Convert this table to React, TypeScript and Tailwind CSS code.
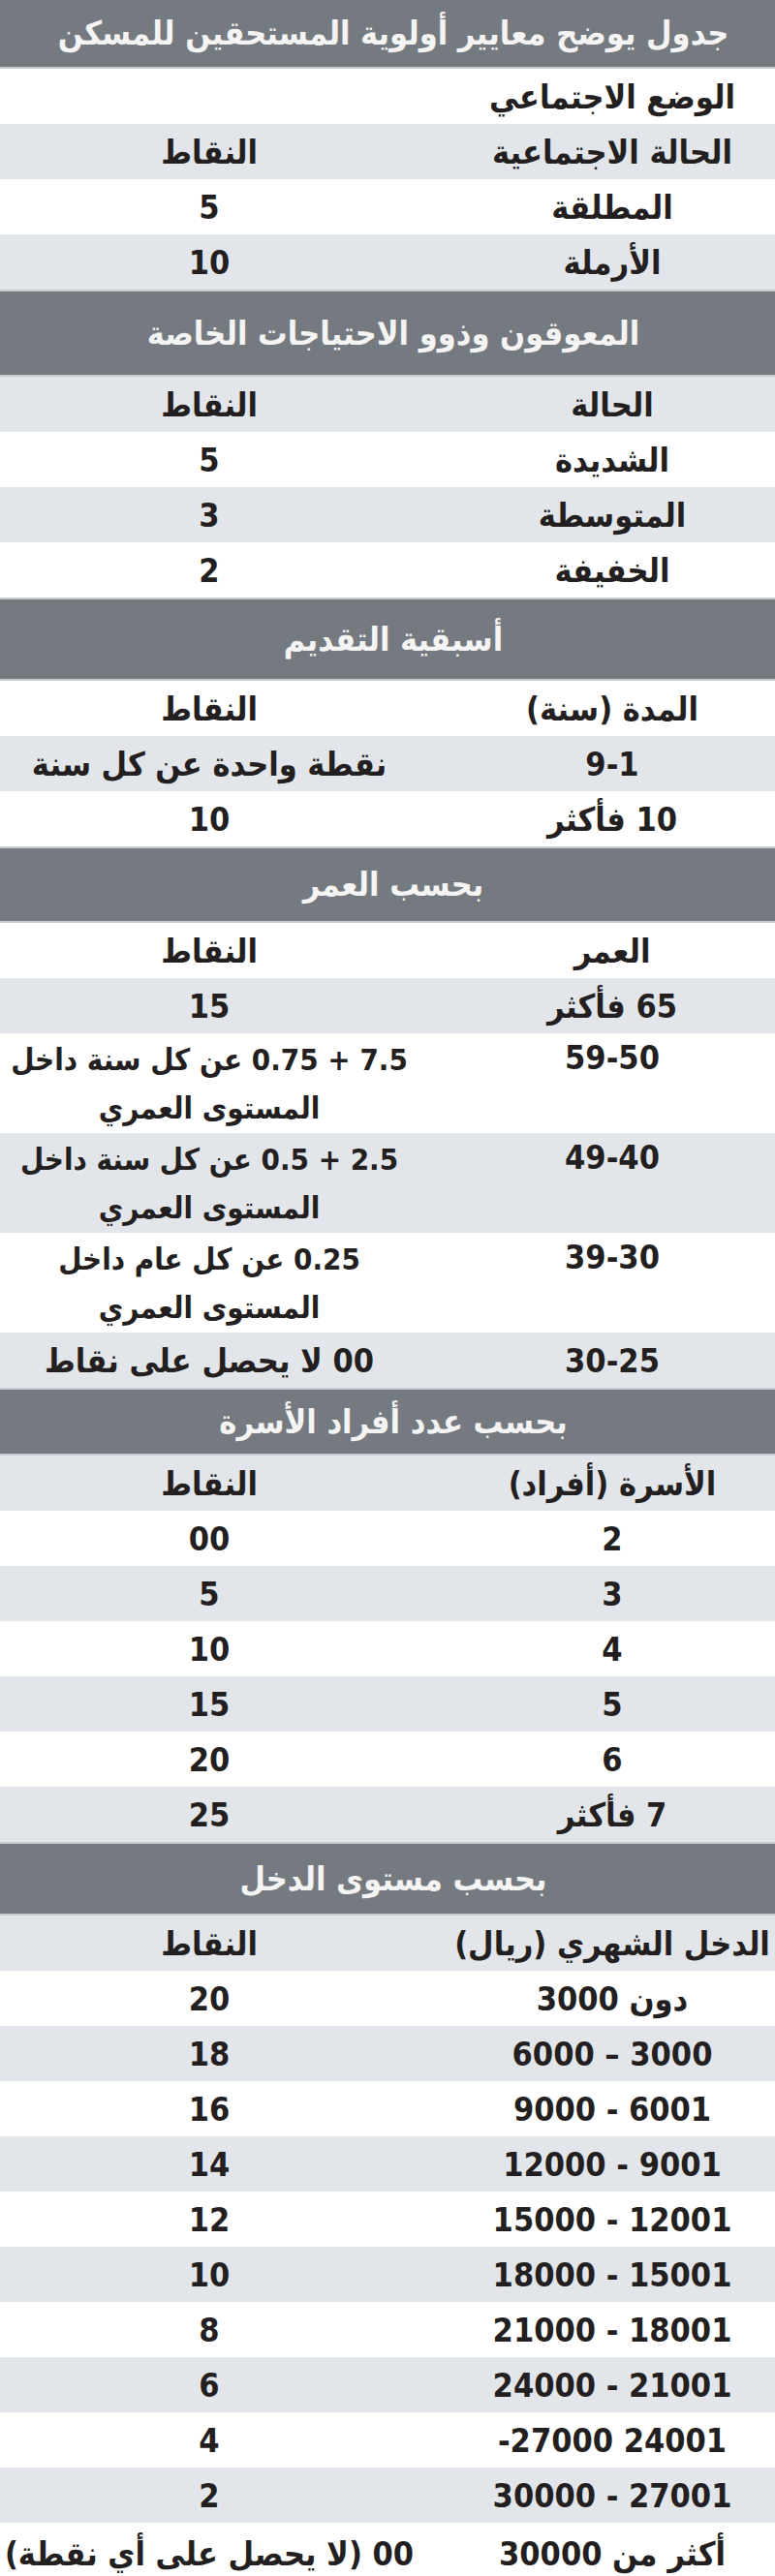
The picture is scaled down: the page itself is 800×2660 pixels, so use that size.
import React from 'react';

type Row = {
  label: string;
  points?: string;
  light?: boolean;
  tall?: boolean;
  ltrLabel?: boolean;
  h?: string;
};

type Section = {
  title: string;
  band: string;
  first?: boolean;
  rows: Row[];
};

const sections: Section[] = [
  {
    title: 'جدول يوضح معايير أولوية المستحقين للمسكن',
    band: 'h-[71px]',
    first: true,
    rows: [
      { label: 'الوضع الاجتماعي' },
      { label: 'الحالة الاجتماعية', points: 'النقاط', light: true },
      { label: 'المطلقة', points: '5' },
      { label: 'الأرملة', points: '10', light: true },
    ],
  },
  {
    title: 'المعوقون وذوو الاحتياجات الخاصة',
    band: 'h-[90px]',
    rows: [
      { label: 'الحالة', points: 'النقاط', light: true },
      { label: 'الشديدة', points: '5' },
      { label: 'المتوسطة', points: '3', light: true },
      { label: 'الخفيفة', points: '2' },
    ],
  },
  {
    title: 'أسبقية التقديم',
    band: 'h-[86px]',
    rows: [
      { label: 'المدة (سنة)', points: 'النقاط' },
      { label: '9-1', points: 'نقطة واحدة عن كل سنة', light: true, ltrLabel: true },
      { label: '10 فأكثر', points: '10' },
    ],
  },
  {
    title: 'بحسب العمر',
    band: 'h-[79px]',
    rows: [
      { label: 'العمر', points: 'النقاط' },
      { label: '65 فأكثر', points: '15', light: true },
      { label: '59-50', points: '7.5 + 0.75 عن كل سنة داخل\nالمستوى العمري', tall: true, ltrLabel: true },
      { label: '49-40', points: '2.5 + 0.5 عن كل سنة داخل\nالمستوى العمري', tall: true, light: true, ltrLabel: true },
      { label: '39-30', points: '0.25 عن كل عام داخل\nالمستوى العمري', tall: true, ltrLabel: true },
      { label: '30-25', points: '00 لا يحصل على نقاط', light: true, ltrLabel: true },
    ],
  },
  {
    title: 'بحسب عدد أفراد الأسرة',
    band: 'h-[70px]',
    rows: [
      { label: 'الأسرة (أفراد)', points: 'النقاط', light: true },
      { label: '2', points: '00' },
      { label: '3', points: '5', light: true },
      { label: '4', points: '10' },
      { label: '5', points: '15', light: true },
      { label: '6', points: '20' },
      { label: '7 فأكثر', points: '25', light: true },
    ],
  },
  {
    title: 'بحسب مستوى الدخل',
    band: 'h-[76px]',
    rows: [
      { label: 'الدخل الشهري (ريال)', points: 'النقاط', light: true },
      { label: 'دون 3000', points: '20' },
      { label: '6000 – 3000', points: '18', light: true, ltrLabel: true },
      { label: '9000 - 6001', points: '16', ltrLabel: true },
      { label: '12000 - 9001', points: '14', light: true, ltrLabel: true },
      { label: '15000 - 12001', points: '12', ltrLabel: true },
      { label: '18000 - 15001', points: '10', light: true, ltrLabel: true },
      { label: '21000 - 18001', points: '8', ltrLabel: true },
      { label: '24000 - 21001', points: '6', light: true, ltrLabel: true },
      { label: '-27000 24001', points: '4', ltrLabel: true },
      { label: '30000 - 27001', points: '2', light: true, ltrLabel: true },
      { label: 'أكثر من 30000', points: '00 (لا يحصل على أي نقطة)', h: 'h-[63px]' },
    ],
  },
];

const font = { fontFamily: '"DejaVu Sans Condensed", "DejaVu Sans", sans-serif' };

function Cell({ text, ltr }: { text?: string; ltr?: boolean }) {
  if (!text) return null;
  const lines = text.split('\n');
  return (
    <span dir={ltr ? 'ltr' : 'rtl'} className="whitespace-nowrap text-center">
      {lines.map((line, i) => (
        <span key={i} className="block">
          {line}
        </span>
      ))}
    </span>
  );
}

function TableRow({ row }: { row: Row }) {
  const height = row.h ?? (row.tall ? 'h-[103px]' : 'h-[57px]');
  return (
    <div
      className={`grid grid-cols-[368px_432px] ${height} ${row.light ? 'bg-[#e2e6eb]' : 'bg-white'} ${
        row.tall ? 'leading-[50px]' : 'leading-[40px]'
      }`}
    >
      <div className={`flex justify-center pl-8 ${row.tall ? 'items-start' : 'items-center'}`}>
        <Cell text={row.label} ltr={row.ltrLabel} />
      </div>
      <div className={`flex items-center justify-center ${row.tall ? 'text-[31px]' : ''}`}>
        <Cell text={row.points} />
      </div>
    </div>
  );
}

export default function App() {
  return (
    <div dir="rtl" className="w-[800px] bg-white text-[#231f20] font-bold text-[34px]" style={font}>
      {sections.map((s, i) => (
        <div key={i}>
          <div
            className={`flex items-center justify-center bg-[#747a7f] text-[#f4f4f4] ${s.band} ${
              s.first ? '' : 'border-t-2 border-[#c7cbcf]'
            } border-b-2 border-b-[#c7cbcf]`}
          >
            <span className="pl-3">{s.title}</span>
          </div>
          {s.rows.map((r, j) => (
            <TableRow key={j} row={r} />
          ))}
        </div>
      ))}
    </div>
  );
}
